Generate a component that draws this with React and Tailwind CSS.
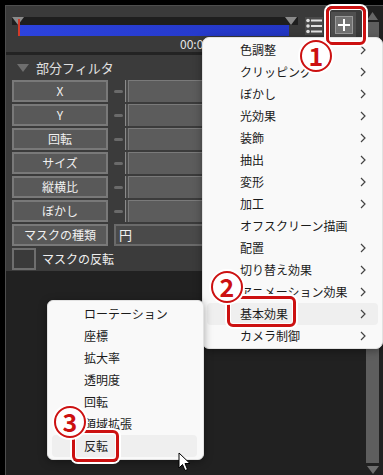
import React from "react";

const FONT = { fontFamily: '"Noto Sans CJK JP", "Noto Sans", sans-serif' };

function Chevron() {
  return (
    <svg width="6" height="10" viewBox="0 0 6 10" className="shrink-0">
      <path d="M1 1 L5 5 L1 9" fill="none" stroke="#444" strokeWidth="1.2" />
    </svg>
  );
}

function ParamRow({ label }) {
  return (
    <div className="flex items-center h-[22px]">
      <div className="w-[96px] h-[22px] flex items-center justify-center border-2 border-[#797979] bg-[#595959] text-[12px] text-[#f0f0f0]">
        {label}
      </div>
      <div className="w-[9px] h-[3px] ml-[6px] rounded-sm bg-[#6a6a6a]" />
      <div className="ml-[2px] w-[1px] h-[22px] bg-[#8a8a8a]" />
      <div className="w-[2px] h-[22px] bg-[#4a4a4a]" />
      <div className="flex-1 h-[22px] border-l border-t border-[#7a7a7a] bg-[#5c5c5c]" />
    </div>
  );
}

const mainItems = [
  ["色調整", true],
  ["クリッピング", true],
  ["ぼかし", true],
  ["光効果", true],
  ["装飾", true],
  ["抽出", true],
  ["変形", true],
  ["加工", true],
  ["オフスクリーン描画", false],
  ["配置", true],
  ["切り替え効果", true],
  ["アニメーション効果", true],
  ["基本効果", true],
  ["カメラ制御", true],
];

const subItems = ["ローテーション", "座標", "拡大率", "透明度", "回転", "領域拡張", "反転"];

function Circled({ n, className }) {
  return (
    <div
      className={
        "absolute w-[32px] h-[32px] rounded-full bg-white border-[2px] border-[#cc1111] flex items-center justify-center text-[#cc1111] text-[25px] leading-none font-semibold shadow-[0_0_0_2px_#ffffff] " +
        className
      }
      style={FONT}
    >
      <span className="mt-[-1px]">{n}</span>
    </div>
  );
}

function RedBox({ className }) {
  return (
    <div
      className={
        "absolute border-[3px] border-[#cc1111] rounded-[6px] shadow-[0_0_0_2px_#ffffff,inset_0_0_0_1px_#ffffff] " +
        className
      }
    />
  );
}

export default function App() {
  return (
    <div className="relative w-[383px] h-[475px] overflow-hidden bg-black pt-[5px] pl-[5px]" style={FONT}>
      <div className="flex h-[470px] border-t border-l border-[#4e4e4e] bg-[#212121]">
        {/* main column */}
        <div className="flex-1 flex flex-col">
          {/* top timeline area */}
          <div className="h-[46px] bg-[#3a3a3a] flex pl-[6px]">
            <div className="w-[286px] flex flex-col pt-[11px]">
              <div className="relative h-[8px] bg-[#1e1e1e]">
                <svg className="absolute left-0 top-0" width="12" height="8" viewBox="0 0 12 8">
                  <path d="M0 0 L12 0 L6 8 Z" fill="#8a8a8a" />
                </svg>
                <svg className="absolute left-[273px] top-0" width="12" height="8" viewBox="0 0 12 8">
                  <path d="M0 0 L12 0 L6 8 Z" fill="#8a8a8a" />
                </svg>
              </div>
              <div className="relative ml-[6px] w-[271px] h-[11px] bg-[linear-gradient(90deg,#2c43de,#2336c4)]">
                <div className="absolute left-0 top-[-6px] w-[2px] h-[17px] bg-[#d23a2a]" />
              </div>
              <div className="pl-[168px] pt-[1px] text-[12px] leading-[14px] text-[#e6e6e6] whitespace-nowrap">
                00:00:00.00
              </div>
            </div>
            <div className="ml-[7px] mt-[11px] w-[18px] h-[18px]">
              <svg width="18" height="18" viewBox="0 0 18 18">
                <rect x="0" y="0" width="18" height="18" fill="#4a4a4a" />
                <circle cx="3" cy="3.5" r="1.8" fill="#e0e0e0" />
                <rect x="6" y="2.5" width="11" height="2" fill="#e0e0e0" />
                <circle cx="3" cy="9" r="1.8" fill="#e0e0e0" />
                <rect x="6" y="8" width="11" height="2" fill="#e0e0e0" />
                <circle cx="3" cy="14.5" r="1.8" fill="#e0e0e0" />
                <rect x="6" y="13.5" width="11" height="2" fill="#e0e0e0" />
              </svg>
            </div>
            <div className="ml-[8px] mt-[6px] w-[25px] h-[25px] bg-[#4f4f4f] flex items-center justify-center">
              <div className="w-[18px] h-[18px] bg-[#727272] border border-[#9a9a9a] flex items-center justify-center">
                <svg width="12" height="12" viewBox="0 0 12 12">
                  <rect x="5" y="0" width="2" height="12" fill="#ffffff" />
                  <rect x="0" y="5" width="12" height="2" fill="#ffffff" />
                </svg>
              </div>
            </div>
          </div>
          {/* separator */}
          <div className="h-[3px] bg-[#232323]" />
          {/* filter panel */}
          <div className="h-[216px] bg-[#3b3b3b] pl-[6px] flex flex-col">
            <div className="h-[25px] flex items-center">
              <svg width="12" height="8" viewBox="0 0 12 8" className="ml-[5px]">
                <path d="M0 0 L12 0 L6 8 Z" fill="#6e6e6e" />
              </svg>
              <span className="ml-[7px] text-[13px] text-[#e0e0e0]">部分フィルタ</span>
            </div>
            <div className="flex flex-col gap-[2px]">
              <ParamRow label="X" />
              <ParamRow label="Y" />
              <ParamRow label="回転" />
              <ParamRow label="サイズ" />
              <ParamRow label="縦横比" />
              <ParamRow label="ぼかし" />
              <div className="flex items-center h-[22px]">
                <div className="w-[96px] h-[22px] flex items-center justify-center border-2 border-[#797979] bg-[#595959] text-[12px] text-[#f0f0f0]">
                  マスクの種類
                </div>
                <div className="ml-[6px] flex-1 h-[22px] border-2 border-[#6a6a6a] bg-[#4a4a4a] text-[13px] text-[#f0f0f0] pl-[3px] flex items-center">
                  円
                </div>
              </div>
              <div className="flex items-center h-[22px]">
                <div className="w-[24px] h-[22px] border-2 border-[#6e6e6e] bg-[#3a3a3a]" />
                <span className="ml-[6px] text-[12px] text-[#f0f0f0]">マスクの反転</span>
              </div>
            </div>
          </div>
          <div className="flex-1 bg-[#212121]" />
        </div>
        {/* scrollbar column */}
        <div className="w-[13px] mr-[4px] flex flex-col">
          <div className="pt-[6px] flex flex-col items-center">
            <svg width="11" height="8" viewBox="0 0 11 8">
              <path d="M5.5 0 L11 8 L0 8 Z" fill="#666666" />
            </svg>
          </div>
          <div className="mt-[2px] h-[441px] bg-[#5e5e5e]" />
          <div className="mt-[3px] flex justify-center">
            <svg width="12" height="8" viewBox="0 0 12 8">
              <path d="M0 0 L12 0 L6 8 Z" fill="#6e6e6e" />
            </svg>
          </div>
        </div>
      </div>

      {/* main context menu */}
      <div className="absolute left-[202px] top-[37px] w-[181px] h-[312px] bg-[#f9f9f9] rounded-[7px] border border-[#e2e2e2] shadow-[0_2px_8px_rgba(0,0,0,0.35)] py-[1px] flex flex-col">
        {mainItems.map(([t, sub], i) => (
          <div
            key={t}
            className={
              "mx-[4px] h-[22px] rounded-[4px] flex items-center pl-[33px] pr-[12px] text-[12px] text-[#1b1b1b] " +
              (i === 12 ? "bg-[#efefef]" : "")
            }
          >
            <span className="flex-1 whitespace-nowrap">{t}</span>
            {sub && <Chevron />}
          </div>
        ))}
      </div>

      {/* sub menu */}
      <div className="absolute left-[47px] top-[300px] w-[157px] h-[160px] bg-[#f9f9f9] rounded-[6px] border border-[#e2e2e2] shadow-[0_2px_8px_rgba(0,0,0,0.35)] py-[2px] flex flex-col">
        {subItems.map((t, i) => (
          <div
            key={t}
            className={
              "ml-[4px] mr-[6px] h-[22px] rounded-[4px] flex items-center pl-[32px] text-[12px] text-[#1b1b1b] " +
              (i === 6 ? "bg-[#efefef]" : "")
            }
          >
            <span className="whitespace-nowrap">{t}</span>
          </div>
        ))}
      </div>

      {/* annotations */}
      <RedBox className="left-[326px] top-[6px] w-[40px] h-[39px]" />
      <Circled n="1" className="left-[300px] top-[40px]" />
      <RedBox className="left-[227px] top-[296px] w-[69px] h-[31px]" />
      <Circled n="2" className="left-[211px] top-[271px]" />
      <RedBox className="left-[72px] top-[430px] w-[47px] h-[32px]" />
      <Circled n="3" className="left-[54px] top-[406px]" />

      {/* cursor */}
      <svg className="absolute left-[178px] top-[452px]" width="13" height="20" viewBox="0 0 13 20">
        <path d="M1 1 L1 16 L4.5 12.5 L7 18.5 L9.5 17.5 L7 11.5 L12 11.5 Z" fill="#ffffff" stroke="#000000" strokeWidth="1" />
      </svg>
    </div>
  );
}
